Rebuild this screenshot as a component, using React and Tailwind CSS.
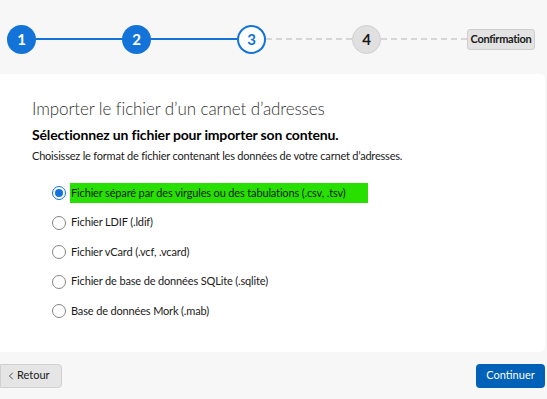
import { ChevronLeft } from "lucide-react";

const steps = [
  { n: 1, state: "done" },
  { n: 2, state: "done" },
  { n: 3, state: "current" },
  { n: 4, state: "todo" },
];

const options = [
  "Fichier séparé par des virgules ou des tabulations (.csv, .tsv)",
  "Fichier LDIF (.ldif)",
  "Fichier vCard (.vcf, .vcard)",
  "Fichier de base de données SQLite (.sqlite)",
  "Base de données Mork (.mab)",
];

function Step({ n, state }) {
  if (state === "done")
    return (
      <div className="w-[29px] h-[29px] shrink-0 rounded-full bg-[#1373d9] text-white flex items-center justify-center text-[15px] font-bold">
        {n}
      </div>
    );
  if (state === "current")
    return (
      <div className="w-[29px] h-[29px] shrink-0 rounded-full border-[2px] border-[#1373d9] bg-white text-[#1373d9] flex items-center justify-center text-[15px] font-bold">
        {n}
      </div>
    );
  return (
    <div className="w-[29px] h-[29px] shrink-0 rounded-full border border-[#d0d0d0] bg-[#e0e0e0] text-[#1a1a1a] flex items-center justify-center text-[15px] font-bold">
      {n}
    </div>
  );
}

export default function App() {
  return (
    <div
      className="w-[547px] h-[399px] bg-[#f7f7f7] flex flex-col overflow-hidden"
      style={{ fontFamily: 'Lato, "Noto Sans", sans-serif' }}
    >
      {/* stepper */}
      <div className="h-[74px] flex items-center pl-[7px] pr-[12px] pt-[4px]">
        {steps.map((s, i) => (
          <div key={s.n} className="flex items-center shrink-0">
            <Step n={s.n} state={s.state} />
            {i < 2 ? (
              <div className="w-[86px] h-[2px] bg-[#1373d9] shrink-0" />
            ) : (
              <div className="w-[86px] border-t-2 border-dashed border-[#d6d6d6] shrink-0" />
            )}
          </div>
        ))}
        <div className="h-[21px] w-[68px] shrink-0 rounded-[3px] border border-[#cfcfcf] bg-[#e3e3e3] text-[11px] tracking-[-0.3px] font-bold text-[#1a1a1a] flex items-center justify-center">
          Confirmation
        </div>
      </div>

      {/* panel */}
      <div className="h-[278px] w-[545px] bg-white rounded-r-[5px] pl-[32px] pt-[23px]">
        <h1 className="text-[17px] tracking-[-0.1px] font-light text-[#333] leading-[24px]">
          Importer le fichier d’un carnet d’adresses
        </h1>
        <h2 className="mt-[4px] text-[14px] tracking-[-0.15px] font-bold text-black leading-[20px]">
          Sélectionnez un fichier pour importer son contenu.
        </h2>
        <p className="mt-[3px] text-[11px] tracking-[-0.2px] text-[#1a1a1a] leading-[16px]">
          Choisissez le format de fichier contenant les données de votre carnet d’adresses.
        </p>
        <div className="mt-[19px] flex flex-col gap-[9.5px] pl-[20px]">
          {options.map((o, i) => (
            <label key={i} className="flex items-center h-[20px]">
              {i === 0 ? (
                <span className="w-[14px] h-[14px] rounded-full border-[1.5px] border-[#1373d9] flex items-center justify-center">
                  <span className="w-[8px] h-[8px] rounded-full bg-[#1373d9]" />
                </span>
              ) : (
                <span className="w-[14px] h-[14px] rounded-full border border-[#858585]" />
              )}
              <span
                className={
                  "ml-[4px] h-[20px] flex items-center pl-[1px] text-[11px] tracking-[-0.15px] text-[#1a1a1a] whitespace-nowrap " +
                  (i === 0 ? "bg-[#28e000] w-[298px]" : "")
                }
              >
                {o}
              </span>
            </label>
          ))}
        </div>
      </div>

      {/* footer */}
      <div className="flex-1 flex items-center justify-between pr-[2px]">
        <button className="h-[24px] w-[62px] rounded-r-[4px] border border-[#d0d0d0] bg-[#e5e5e5] text-[11px] text-[#1a1a1a] flex items-center pl-[4px]">
          <ChevronLeft size={12} strokeWidth={1.5} />
          Retour
        </button>
        <button className="h-[24px] w-[69px] rounded-[4px] bg-[#0061b8] text-white text-[11px] flex items-center justify-center">
          Continuer
        </button>
      </div>
    </div>
  );
}
